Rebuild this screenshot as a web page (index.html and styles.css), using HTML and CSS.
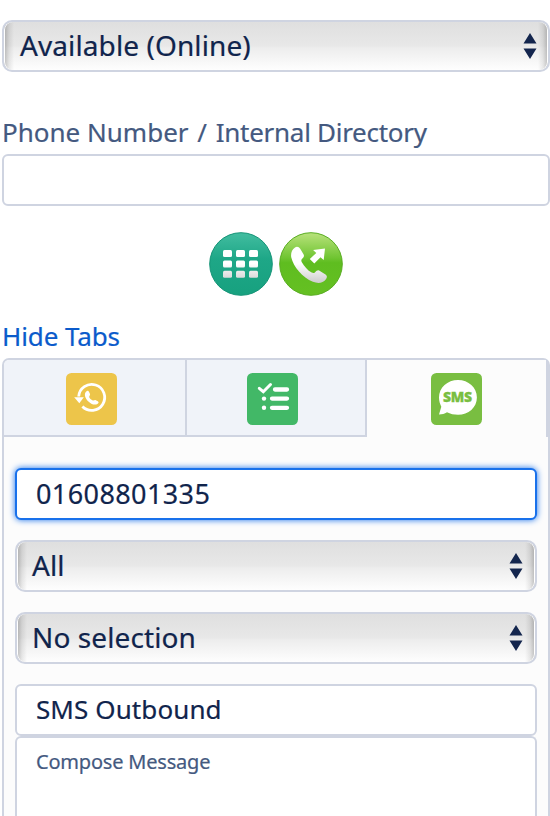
FILE: index.html
```html
<!DOCTYPE html>
<html lang="en">
<head>
<meta charset="utf-8">
<title>Softphone</title>
<link rel="stylesheet" href="styles.css">
</head>
<body>
<main class="phone">
  <div class="select status">
    <span class="t-status">Available (Online)</span>
    <svg class="arrows" viewBox="0 0 14 26"><path d="M7 0l6.500 10.500H.5zM7 26L.5 15.500h13z"/></svg>
  </div>
  <div class="label">Phone Number <span class="slash">/</span> <span class="t-directory">Internal Directory</span></div>
  <div class="input number"></div>
  <div class="actions">
    <svg width="64" height="64" viewBox="0 0 64 64">
      <defs>
        <linearGradient id="teal" x2="0" y2="1"><stop offset="0" stop-color="#42bda0"/><stop offset=".42" stop-color="#1ea787"/><stop offset="1" stop-color="#17a17f"/></linearGradient>
        <linearGradient id="white" gradientUnits="userSpaceOnUse" x1="0" y1="16" x2="0" y2="51"><stop offset=".45" stop-color="#fff"/><stop offset="1" stop-color="#ccc"/></linearGradient>
      </defs>
      <circle cx="32" cy="32" r="31.300" fill="url(#teal)" stroke="#159477"/>
      <g fill="url(#white)">
        <rect x="14" y="18" width="9" height="7" rx="1.500"/><rect x="27" y="18" width="9" height="7" rx="1.500"/><rect x="40" y="18" width="9" height="7" rx="1.500"/>
        <rect x="14" y="28.500" width="9" height="7" rx="1.500"/><rect x="27" y="28.500" width="9" height="7" rx="1.500"/><rect x="40" y="28.500" width="9" height="7" rx="1.500"/>
        <rect x="14" y="38.800" width="9" height="7" rx="1.500"/><rect x="27" y="38.800" width="9" height="7" rx="1.500"/><rect x="40" y="38.800" width="9" height="7" rx="1.500"/>
      </g>
    </svg>
    <svg width="64" height="64" viewBox="0 0 64 64">
      <defs><linearGradient id="lime" x2="0" y2="1"><stop offset="0" stop-color="#b9e27c"/><stop offset=".4" stop-color="#70c532"/><stop offset=".48" stop-color="#5fbd20"/><stop offset="1" stop-color="#65c022"/></linearGradient></defs>
      <circle cx="32" cy="32" r="31.300" fill="url(#lime)" stroke="#59ad22"/>
      <path fill="url(#white)" d="M16 15.500c2-1.600 4-.5 5.200 1.300l3.300 5.500c1.200 2.200-.2 3.300-1.600 4.800-.9 1-.7 2 .1 3.300 2 3.500 5.700 8 9.700 10.200 1.300.7 2.300.6 3.200-.2 1.700-1.500 3-2.800 5-1.500l5.600 3.700c2 1.500 1.600 3 .4 4.700-3 4-8 4.500-13 2.500C23.500 45.500 14.500 35 12.300 25.500c-.8-4 .5-7.800 3.700-10z"/>
      <path fill="#fff" d="M46 16.500l-1.300 11.500-3.200-2.700-6.200 6.200-4.500-4.500 6.500-6.100-3.200-3z"/>
    </svg>
  </div>
  <div class="toggle"><a>Hide Tabs</a></div>
  <section class="panel">
    <nav class="tabs">
      <div class="tab">
        <svg class="tile" viewBox="0 0 51 52">
          <rect width="51" height="52" rx="5.500" fill="#edc54a"/>
          <path d="M12.700 23.500a13 13 0 1 1 3.700 10" fill="none" stroke="#fff" stroke-width="2.800"/>
          <path d="M8.200 24.300h9.600l-4.500 6z" fill="#fff"/>
          <path d="M20 18.700c1.700-1.500 2.500-.8 3.200.6l.8 1.800c.5 1.300-.9 1.900-.8 3 .2 1.200 2 2.900 3.600 3.400 1.200.3 1.800-.8 3-.3l2 1.100c1.300.9.900 1.900-.4 2.700-2.900 1.600-6.700-.1-9.300-2.800-2.600-2.700-4.500-6.900-2.100-9.500z" fill="#fff"/>
        </svg>
      </div>
      <div class="tab">
        <svg class="tile" viewBox="0 0 51 52">
          <rect width="51" height="52" rx="5.500" fill="#42b867"/>
          <g fill="none" stroke="#fff">
            <path d="M12.300 15.300l4 3.400 7.200-7.200" stroke-width="3" stroke-linecap="round"/>
            <path d="M28 16.500h12M25 25.600h15M25 34.800h15" stroke-width="4.300" stroke-linecap="round"/>
          </g>
          <circle cx="17" cy="25.600" r="2.200" fill="#fff"/><circle cx="17" cy="34.800" r="2.200" fill="#fff"/>
        </svg>
      </div>
      <div class="tab active">
        <svg class="tile" viewBox="0 0 51 52">
          <rect width="51" height="52" rx="5.500" fill="#79be41"/>
          <path d="M27 7C16.500 7 8 14.500 8 24.500c0 3.500 1 6.500 2.300 9.200L8 41.500c3.200 0 5.500-.7 8-2.200 3.200 1.700 7 2.500 11 2.500 10.500 0 18.900-7.500 18.900-17.400S37.500 7 27 7z" fill="#fff"/>
          <text class="sms" x="12" y="29.200" textLength="29" lengthAdjust="spacing">SMS</text>
        </svg>
      </div>
    </nav>
    <div class="form">
      <div class="input focused"><span class="t-number">01608801335</span></div>
      <div class="select"><span class="t-all">All</span><svg class="arrows" viewBox="0 0 14 26"><path d="M7 0l6.500 10.500H.5zM7 26L.5 15.500h13z"/></svg></div>
      <div class="select"><span class="t-none">No selection</span><svg class="arrows" viewBox="0 0 14 26"><path d="M7 0l6.500 10.500H.5zM7 26L.5 15.500h13z"/></svg></div>
      <div class="message">
        <div class="input"><span class="t-subject">SMS Outbound</span></div>
        <div class="compose"><span>Compose Message</span></div>
      </div>
    </div>
  </section>
</main>
</body>
</html>
```
FILE: styles.css
```css
* { box-sizing: border-box; }
body { margin: 0; background: #fff; color: #10244c; font-family: "Noto Sans", sans-serif; font-size: 26px; -webkit-text-stroke: .2px; }
.phone { display: flex; flex-direction: column; height: 816px; padding: 20px 0 0 2px; overflow: hidden; }
span, a { white-space: nowrap; }
svg { display: block; flex: none; }
.select, .input { flex: none; display: flex; align-items: center; height: 52px; border: 2px solid #cfd4e1; line-height: 48px; }
.select {
  justify-content: space-between; padding: 0 12px 0 15px; border-radius: 10px; font-size: 28px; letter-spacing: .1px;
  background:
    linear-gradient(90deg, rgba(0,0,0,.24), rgba(0,0,0,.08) 5px, transparent 10px),
    linear-gradient(270deg, rgba(0,0,0,.24), rgba(0,0,0,.08) 5px, transparent 10px),
    linear-gradient(#dfdfdf, #e8e8e8 50%, #ededed 54%, #fefefe);
  background-origin: padding-box;
  box-shadow: inset 1px 0 0 #fff, inset -1px 0 0 #fff;
}
.select span { margin-top: -3px; }
.status { padding: 0 11px 0 16px; }
.arrows { width: 14px; height: 26px; fill: #14264e; }
.input { padding: 0 19px; border-radius: 6px; background: #fff; }
.label { flex: none; height: 82px; padding-top: 42px; line-height: 36px; color: #445980; white-space: nowrap; }
.slash { margin: 0 2px; }
.t-directory { letter-spacing: -.28px; }
.actions { flex: none; display: flex; gap: 6px; height: 116px; padding: 26px 0 0 207px; }
.toggle { flex: none; height: 36px; line-height: 28px; color: #0b5bcb; letter-spacing: -.1px; }
.panel { flex: 1; min-height: 0; border: 2px solid #cfd4e1; border-bottom: 0; border-radius: 7px 7px 0 0; background: #fcfcfc; }
.tabs { display: flex; height: 77px; }
.tab { display: flex; justify-content: center; width: 183px; padding-top: 13px; background: #f0f3f9; border-right: 2px solid #cfd4e1; border-bottom: 2px solid #cfd4e1; }
.tab:first-child { padding-right: 6px; border-top-left-radius: 5px; }
.tab:nth-child(2) { width: 180px; padding-right: 7px; }
.tab.active { flex: 1; background: #fcfcfc; border-bottom: 0; padding-left: 3px; padding-right: 3px; }
.tile { width: 51px; height: 52px; }
.sms { font: 900 14px "Noto Sans", sans-serif; fill: #79be41; stroke: #79be41; stroke-width: .3px; }
.form { display: flex; flex-direction: column; gap: 20px; padding: 31px 11px 0; }
.focused { border-color: #1971eb; box-shadow: 0 0 6px #1971eb; }
.t-number { font-size: 27px; letter-spacing: .4px; }
.t-subject { letter-spacing: .1px; margin-top: -2px; }
.message { display: flex; flex-direction: column; }
.compose { height: 90px; padding: 8px 19px; border: 2px solid #cfd4e1; border-bottom: 0; border-radius: 6px 6px 0 0; background: #fff; color: #445980; font-size: 20px; line-height: 32px; letter-spacing: -.2px; }
```
